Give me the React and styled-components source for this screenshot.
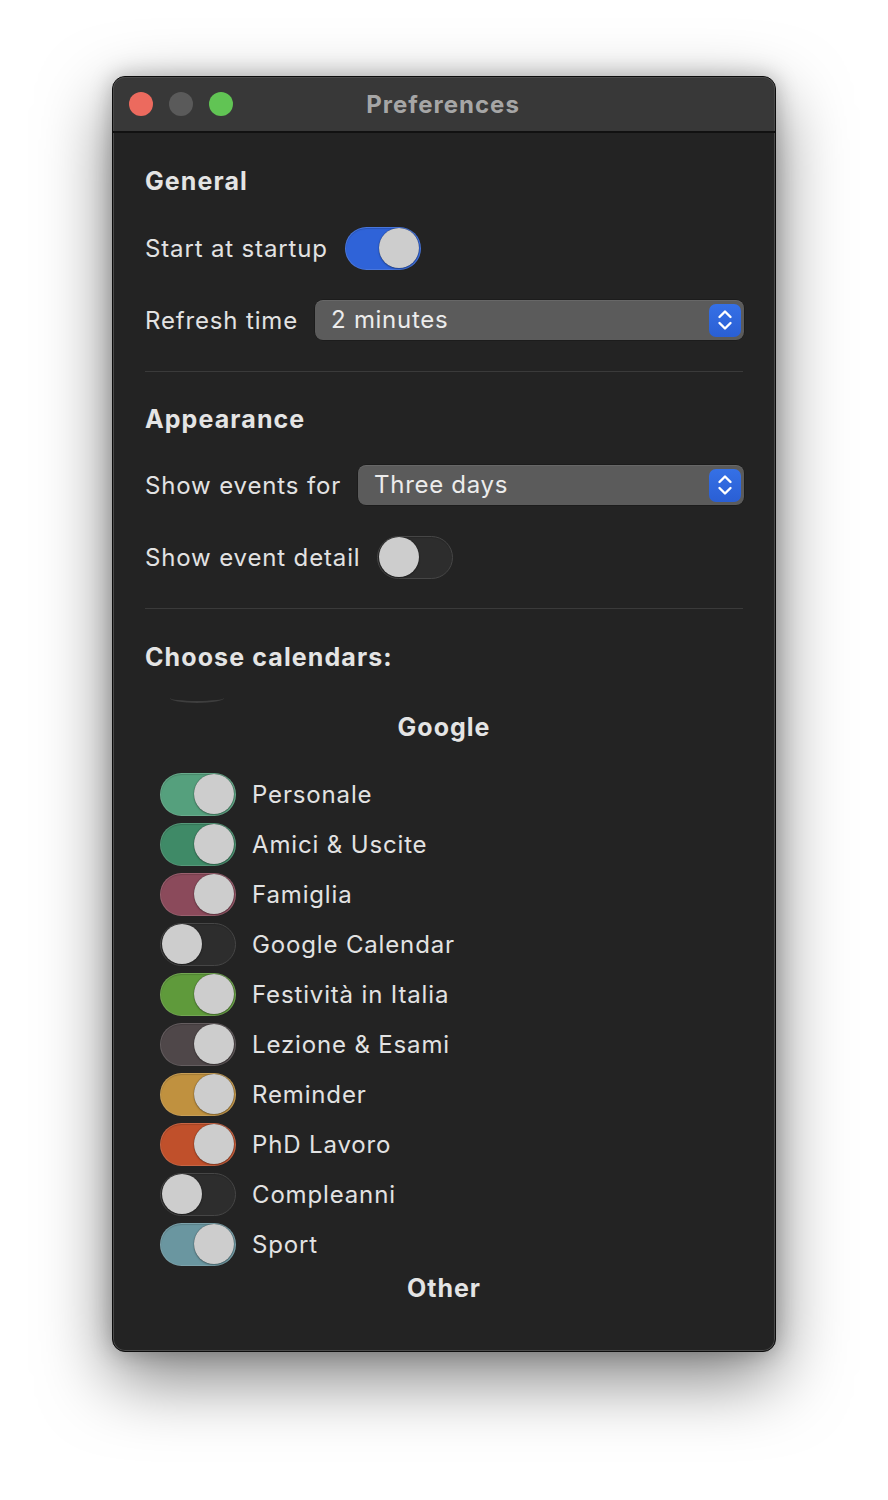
import React from "react";
import styled, { createGlobalStyle } from "styled-components";

const Global = createGlobalStyle`
  html, body { margin: 0; padding: 0; background: #ffffff; }
  body { font-family: Inter, "Open Sans", "Liberation Sans", sans-serif; }
  * { box-sizing: border-box; }
`;

const Page = styled.div`
  width: 888px;
  height: 1500px;
  display: flex;
  justify-content: center;
  padding-top: 76px;
  background: #fff;
`;

const Window = styled.div`
  width: 664px;
  height: 1276px;
  border-radius: 13px;
  background: #232323;
  border: 1px solid #0c0c0c;
  box-shadow: inset 0 0 0 1px #4a4a4a, 0 26px 70px rgba(0, 0, 0, 0.5), 0 0 22px rgba(0,0,0,0.25);
  overflow: hidden;
  display: flex;
  flex-direction: column;
`;

const TitleBar = styled.div`
  height: 56px;
  flex: none;
  background: #383838;
  border-bottom: 2px solid #111;
  display: grid;
  grid-template-columns: 1fr auto 1fr;
  align-items: center;
  padding: 0 16px;
  border-radius: 12px 12px 0 0;
  box-shadow: inset 0 1px 0 #4a4a4a, inset 1px 0 0 #4a4a4a, inset -1px 0 0 #4a4a4a;
`;

const Lights = styled.div`
  display: flex;
  gap: 16px;
`;

const Light = styled.span`
  width: 24px;
  height: 24px;
  border-radius: 50%;
  background: ${(p) => p.$c};
`;

const Title = styled.div`
  font-size: 24px;
  font-weight: 700;
  color: #a6a6a6;
  letter-spacing: 1px;
  transform: translateX(-1px);
`;

const Content = styled.div`
  padding: 32px 32px 0 32px;
  display: flex;
  flex-direction: column;
`;

const Heading = styled.div`
  font-size: 25px;
  font-weight: 700;
  color: #e4e4e4;
  letter-spacing: 1.1px;
  line-height: 30px;
  margin: ${(p) => p.$m || "0"};
`;

const Row = styled.div`
  display: flex;
  align-items: center;
  gap: 17px;
  height: ${(p) => p.$h || 44}px;
  margin-top: ${(p) => p.$mt || 0}px;
`;

const Label = styled.span`
  font-size: 24px;
  color: #e2e2e2;
  letter-spacing: 0.85px;
  white-space: nowrap;
`;

const Track = styled.div`
  width: 76px;
  height: 43px;
  border-radius: 22px;
  flex: none;
  background: ${(p) => (p.$on ? p.$c : "#2d2d2d")};
  border: 1px solid ${(p) => (p.$on ? "rgba(255,255,255,0.12)" : "#464646")};
  display: flex;
  align-items: center;
  justify-content: ${(p) => (p.$on ? "flex-end" : "flex-start")};
  padding: 0 1px;
  box-shadow: inset 0 1px 1px rgba(0, 0, 0, 0.15);
`;

const Knob = styled.div`
  width: 40px;
  height: 40px;
  border-radius: 50%;
  background: #cdcdcd;
  box-shadow: 0 0 1px rgba(0, 0, 0, 0.6), 0 1px 2px rgba(0,0,0,0.3);
`;

const Toggle = ({ on, color }) => (
  <Track $on={on} $c={color}>
    <Knob />
  </Track>
);

const Select = styled.div`
  flex: 1;
  height: 40px;
  border-radius: 8px;
  background: #5b5b5b;
  box-shadow: inset 0 1px 0 rgba(255,255,255,0.08), 0 0 0 0.5px rgba(0,0,0,0.4);
  display: flex;
  align-items: center;
  justify-content: space-between;
  padding: 0 3px 0 16px;
  margin-right: -1px;
`;

const SelectText = styled.span`
  font-size: 24px;
  color: #ececec;
  letter-spacing: 0.7px;
  margin-top: -2px;
`;

const Stepper = styled.div`
  width: 32px;
  height: 33px;
  border-radius: 7px;
  background: linear-gradient(#3570e6, #2a5fd4);
  display: flex;
  align-items: center;
  justify-content: center;
`;

const Divider = styled.div`
  height: 1px;
  background: #3a3a3a;
  margin: ${(p) => p.$m};
`;

const Partial = styled.div`
  width: 54px;
  height: 5px;
  margin: 26px 0 0 25px;
  border-bottom: 2px solid #3e3e3e;
  border-radius: 0 0 27px 27px / 0 0 5px 5px;
`;

const Center = styled.div`
  text-align: center;
  font-size: 25px;
  font-weight: 700;
  color: #e4e4e4;
  letter-spacing: 1px;
  line-height: 30px;
  margin: ${(p) => p.$m};
`;

const CalList = styled.div`
  display: flex;
  flex-direction: column;
  gap: 6px;
  padding-left: 15px;
  margin-top: 30px;
`;

const CalRow = styled.div`
  display: flex;
  align-items: center;
  gap: 16px;
  height: 44px;
`;

const calendars = [
  ["Personale", true, "#55a07d"],
  ["Amici & Uscite", true, "#3f8a67"],
  ["Famiglia", true, "#8b4a5b"],
  ["Google Calendar", false, ""],
  ["Festività in Italia", true, "#5f9a3b"],
  ["Lezione & Esami", true, "#4f4749"],
  ["Reminder", true, "#c0913f"],
  ["PhD Lavoro", true, "#c0502b"],
  ["Compleanni", false, ""],
  ["Sport", true, "#6a96a0"],
];

const Chevrons = () => (
  <svg width="18" height="24" viewBox="0 0 18 24" fill="none">
    <path d="M3.5 9 L9 3.5 L14.5 9" stroke="#fff" strokeWidth="2.4" strokeLinecap="round" strokeLinejoin="round" />
    <path d="M3.5 15 L9 20.5 L14.5 15" stroke="#fff" strokeWidth="2.4" strokeLinecap="round" strokeLinejoin="round" />
  </svg>
);

export default function App() {
  return (
    <>
      <Global />
      <Page>
        <Window>
          <TitleBar>
            <Lights>
              <Light $c="#ec6a5e" />
              <Light $c="#5a5a5a" />
              <Light $c="#61c454" />
            </Lights>
            <Title>Preferences</Title>
            <span />
          </TitleBar>
          <Content>
            <Heading $m="1px 0 0 0">General</Heading>
            <Row $mt={30}>
              <Label>Start at startup</Label>
              <Toggle on color="#2f63d8" />
            </Row>
            <Row $mt={29} $h={42}>
              <Label>Refresh time</Label>
              <Select>
                <SelectText>2 minutes</SelectText>
                <Stepper><Chevrons /></Stepper>
              </Select>
            </Row>
            <Divider $m="30px 0 0 0" />
            <Heading $m="32px 0 0 0">Appearance</Heading>
            <Row $mt={30} $h={42}>
              <Label>Show events for</Label>
              <Select>
                <SelectText>Three days</SelectText>
                <Stepper><Chevrons /></Stepper>
              </Select>
            </Row>
            <Row $mt={29}>
              <Label>Show event detail</Label>
              <Toggle on={false} />
            </Row>
            <Divider $m="29px 0 0 0" />
            <Heading $m="33px 0 0 0">Choose calendars:</Heading>
            <Partial />
            <Center $m="9px 0 0 0">Google</Center>
            <CalList>
              {calendars.map(([name, on, c]) => (
                <CalRow key={name}>
                  <Toggle on={on} color={c} />
                  <Label>{name}</Label>
                </CalRow>
              ))}
            </CalList>
            <Center $m="7px 0 0 0">Other</Center>
          </Content>
        </Window>
      </Page>
    </>
  );
}
